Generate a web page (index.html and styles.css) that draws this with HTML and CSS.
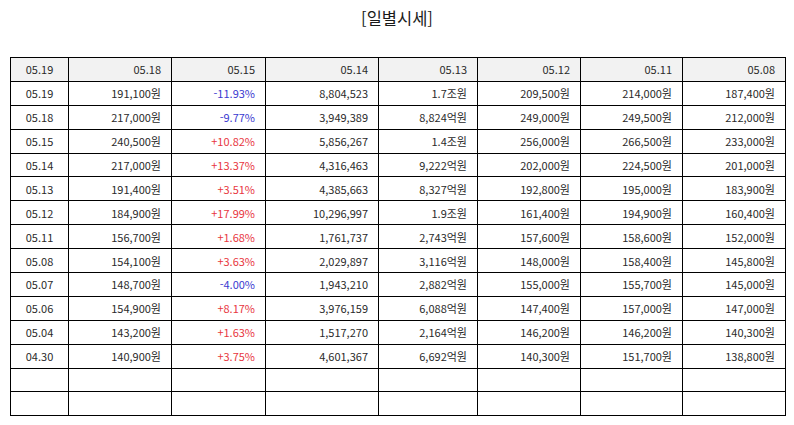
FILE: index.html
```html
<!DOCTYPE html>
<html lang="ko">
<head>
<meta charset="utf-8">
<title>일별시세</title>
<link rel="stylesheet" href="styles.css">
</head>
<body>
<h1 class="title">[일별시세]</h1>
<table class="price-table">
  <colgroup>
    <col class="c1"><col class="c2"><col class="c3"><col class="c4"><col class="c5"><col class="c6"><col class="c7"><col class="c8">
  </colgroup>
  <thead>
    <tr><th>05.19</th><th>05.18</th><th>05.15</th><th>05.14</th><th>05.13</th><th>05.12</th><th>05.11</th><th>05.08</th></tr>
  </thead>
  <tbody>
    <tr><td>05.19</td><td>191,100원</td><td class="down">-11.93%</td><td>8,804,523</td><td>1.7조원</td><td>209,500원</td><td>214,000원</td><td>187,400원</td></tr>
    <tr><td>05.18</td><td>217,000원</td><td class="down">-9.77%</td><td>3,949,389</td><td>8,824억원</td><td>249,000원</td><td>249,500원</td><td>212,000원</td></tr>
    <tr><td>05.15</td><td>240,500원</td><td class="up">+10.82%</td><td>5,856,267</td><td>1.4조원</td><td>256,000원</td><td>266,500원</td><td>233,000원</td></tr>
    <tr><td>05.14</td><td>217,000원</td><td class="up">+13.37%</td><td>4,316,463</td><td>9,222억원</td><td>202,000원</td><td>224,500원</td><td>201,000원</td></tr>
    <tr><td>05.13</td><td>191,400원</td><td class="up">+3.51%</td><td>4,385,663</td><td>8,327억원</td><td>192,800원</td><td>195,000원</td><td>183,900원</td></tr>
    <tr><td>05.12</td><td>184,900원</td><td class="up">+17.99%</td><td>10,296,997</td><td>1.9조원</td><td>161,400원</td><td>194,900원</td><td>160,400원</td></tr>
    <tr><td>05.11</td><td>156,700원</td><td class="up">+1.68%</td><td>1,761,737</td><td>2,743억원</td><td>157,600원</td><td>158,600원</td><td>152,000원</td></tr>
    <tr><td>05.08</td><td>154,100원</td><td class="up">+3.63%</td><td>2,029,897</td><td>3,116억원</td><td>148,000원</td><td>158,400원</td><td>145,800원</td></tr>
    <tr><td>05.07</td><td>148,700원</td><td class="down">-4.00%</td><td>1,943,210</td><td>2,882억원</td><td>155,000원</td><td>155,700원</td><td>145,000원</td></tr>
    <tr><td>05.06</td><td>154,900원</td><td class="up">+8.17%</td><td>3,976,159</td><td>6,088억원</td><td>147,400원</td><td>157,000원</td><td>147,000원</td></tr>
    <tr><td>05.04</td><td>143,200원</td><td class="up">+1.63%</td><td>1,517,270</td><td>2,164억원</td><td>146,200원</td><td>146,200원</td><td>140,300원</td></tr>
    <tr><td>04.30</td><td>140,900원</td><td class="up">+3.75%</td><td>4,601,367</td><td>6,692억원</td><td>140,300원</td><td>151,700원</td><td>138,800원</td></tr>
    <tr><td></td><td></td><td></td><td></td><td></td><td></td><td></td><td></td></tr>
    <tr><td></td><td></td><td></td><td></td><td></td><td></td><td></td><td></td></tr>
  </tbody>
</table>
</body>
</html>
```

FILE: styles.css
```css
html, body {
  margin: 0;
  padding: 0;
  background: #fff;
}
body {
  font-family: "Noto Sans CJK KR", "Noto Sans", sans-serif;
  color: #2a2a2a;
}
.title {
  margin: 0;
  padding-top: 7px;
  height: 57px;
  box-sizing: border-box;
  text-align: center;
  font-size: 16.5px;
  font-weight: normal;
  line-height: 22px;
  color: #1a1a1a;
}
.price-table {
  margin-left: 10px;
  width: 775px;
  border-collapse: collapse;
  table-layout: fixed;
  font-size: 11px;
}
.c1 { width: 58px; }
.c2 { width: 103px; }
.c3 { width: 94px; }
.c4 { width: 113px; }
.c5 { width: 99px; }
.c6 { width: 103px; }
.c7 { width: 102px; }
.c8 { width: 103px; }
.price-table th,
.price-table td {
  border: 1px solid #000;
  height: 22.9px;
  padding: 0 10px 0 4px;
  text-align: right;
  font-weight: normal;
  line-height: 14px;
  white-space: nowrap;
}
.price-table th {
  background: #f2f2f2;
}
.price-table th:first-child,
.price-table td:first-child {
  text-align: center;
  padding: 0;
}
.price-table .down { color: #3a3ad0; }
.price-table .up { color: #e8363e; }
```
